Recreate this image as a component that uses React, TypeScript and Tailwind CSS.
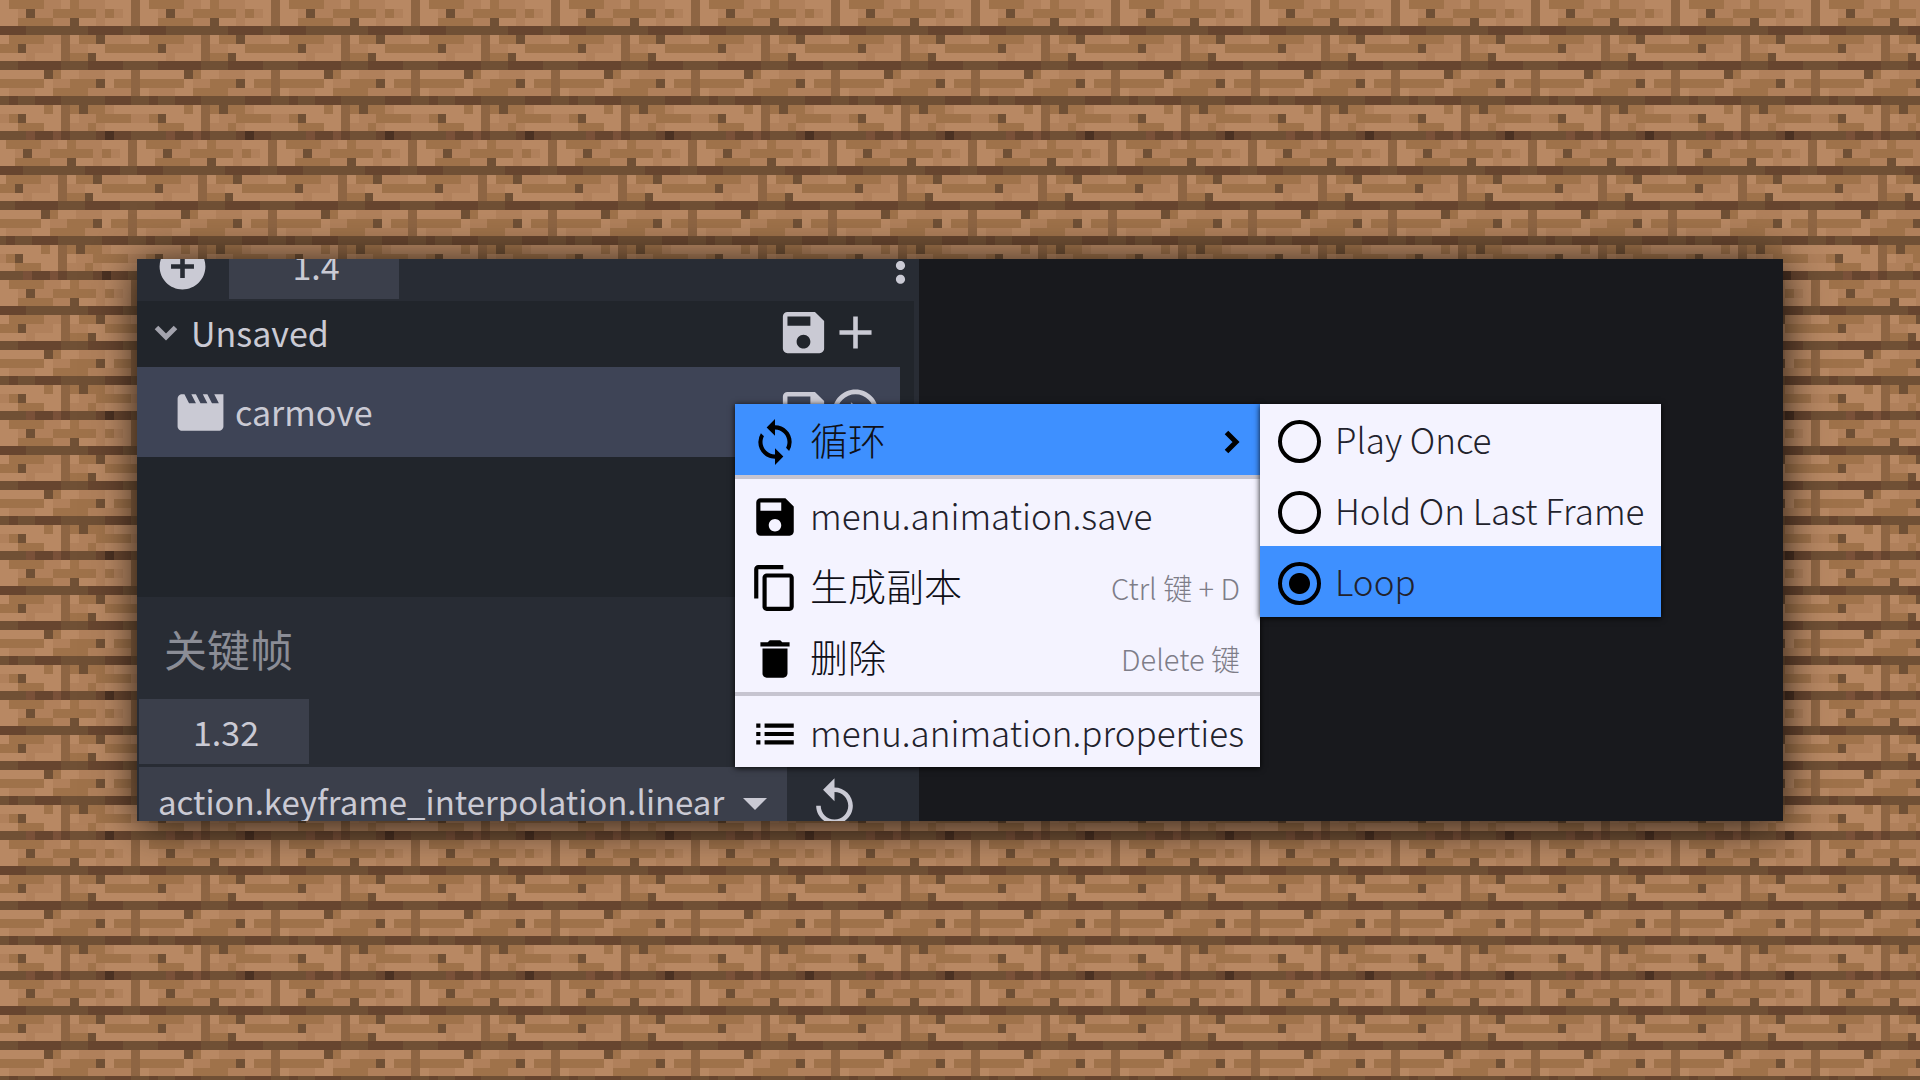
import type { ReactNode } from "react";
import {
  MdAddCircle,
  MdAdd,
  MdMoreVert,
  MdSave,
  MdMovie,
  MdPlayCircleOutline,
  MdSync,
  MdContentCopy,
  MdDelete,
  MdList,
  MdReplay,
} from "react-icons/md";

const PLANK_COLORS: Record<string, string> = {
  L: "#b88863",
  M: "#b0805b",
  T: "#9f724a",
  K: "#705035",
  V: "#8e6543",
  D: "#67452f",
  R: "#7a5139",
  X: "#4b3122",
};

// 16x16 wood plank tile, one letter per texel.
const PLANKS = [
  "LTTTTMMLTMMMLLLV",
  "LLMKMMTTTTTMTMLV",
  "LLTTTTMMKLLMLLLV",
  "DDDKKKKKKKDDDDKK",
  "LTTTTMMVLTTKMMML",
  "TTKMMMLVMMLLTTTT",
  "LLLMLLLVTTKLLLLL",
  "KKDDDDDKKKDDDDKK",
  "LLLLLKTLLMMMLLLV",
  "TTTTTLMMTTTKLTTV",
  "LMMMLLTTTTMMMMMV",
  "KDKKDDDKKKKKDDDK",
  "LLLLLTLVTKTTMLLL",
  "MTKLLLLVLMMTTTTM",
  "LLTTTLLVMMTMLLLL",
  "KKKRDDRDKKKDXDDK",
];

function PlankBackground() {
  return (
    <svg className="absolute inset-0 h-full w-full" aria-hidden="true" shapeRendering="crispEdges">
      <defs>
        <pattern id="planks" width="140" height="140" patternUnits="userSpaceOnUse">
          {PLANKS.map((row, y) =>
            row.split("").map((c, x) => (
              <rect
                key={`${x}-${y}`}
                x={Math.round(x * 8.75)}
                y={Math.round(y * 8.75)}
                width="9"
                height="9"
                fill={PLANK_COLORS[c]}
              />
            )),
          )}
        </pattern>
      </defs>
      <rect width="100%" height="100%" fill="url(#planks)" />
      <g transform="translate(-3 140)">
        <rect width="110%" height="140" fill="url(#planks)" />
      </g>
    </svg>
  );
}

function Chevron({ className }: { className: string }) {
  return (
    <svg viewBox="0 0 16 24" className={className} fill="none" stroke="currentColor" strokeWidth="5" aria-hidden="true">
      <path d="M2.5 2.5 L12 12 L2.5 21.5" />
    </svg>
  );
}

function MenuItem({
  icon,
  label,
  hotkey,
  active,
  submenu,
  large,
}: {
  icon: ReactNode;
  label: string;
  hotkey?: string;
  active?: boolean;
  submenu?: boolean;
  large?: boolean;
}) {
  return (
    <button
      type="button"
      role="menuitem"
      className={`flex h-[71px] w-full items-center gap-[10px] pr-5 pl-[15px] text-left text-black ${active ? "bg-[#3e90ff]" : ""}`}
    >
      <span className="mt-1 text-[50px]">{icon}</span>
      <span className={`flex-1 whitespace-nowrap ${large ? "mb-[2px] text-[38px] text-[#101018]" : "text-[#22222c]"}`}>
        {label}
      </span>
      {hotkey && <span className="mt-1 text-[29px] whitespace-nowrap text-[#7e7d88]">{hotkey}</span>}
      {submenu && <Chevron className="mt-1 h-6 w-4" />}
    </button>
  );
}

function LoopOption({ label, checked }: { label: string; checked?: boolean }) {
  return (
    <label className={`flex h-[71px] items-center gap-[14px] pl-[18px] ${checked ? "bg-[#3e90ff]" : ""}`}>
      <input
        type="radio"
        name="loop"
        defaultChecked={checked}
        className="mt-1 size-[43px] shrink-0 appearance-none rounded-full border-4 border-black checked:bg-[radial-gradient(circle,#000_10px,transparent_11px)]"
      />
      <span className="mb-[2px] whitespace-nowrap text-[#22222c]">{label}</span>
    </label>
  );
}

export default function App() {
  return (
    <main className="relative flex min-h-screen items-center overflow-hidden px-[137px] font-['Noto_Sans_CJK_SC','Noto_Sans',sans-serif] text-[34px] leading-none">
      <PlankBackground />
      <section className="relative flex w-full overflow-hidden bg-[#18191d] text-[#cacad4] shadow-[0_4px_40px_rgba(0,0,0,0.8)]">
        <div className="w-[782px] shrink-0 bg-[#282c34]">
          <div className="flex h-[42px] items-end overflow-hidden pr-[3px] pb-[2px] pl-[18px]">
            <div className="flex h-[66px] w-full items-center">
              <button type="button" aria-label="Add" className="text-[55px]">
                <MdAddCircle />
              </button>
              <input
                aria-label="Time"
                defaultValue="1.4"
                className="ml-[19px] h-[66px] w-[170px] bg-[#3b3f4b] pb-[2px] pl-1 text-center"
              />
              <button type="button" aria-label="More" className="-mr-3 mb-[2px] ml-auto text-[55px]">
                <MdMoreVert />
              </button>
            </div>
          </div>

          <div className="mr-[5px] bg-[#21252b]">
            <div className="flex h-[66px] items-center pr-[31px] pb-[3px] pl-[17px]">
              <button type="button" className="flex items-center gap-[13px]">
                <Chevron className="h-6 w-6 rotate-90 text-[#a3a3ad]" />
                <span>Unsaved</span>
              </button>
              <button type="button" aria-label="Save" className="ml-auto text-[55px]">
                <MdSave />
              </button>
              <button type="button" aria-label="Add animation" className="-ml-[3px] text-[55px]">
                <MdAdd />
              </button>
            </div>
            <div className="mr-[14px] flex h-[90px] items-center bg-[#3e4456] pr-[17px] pl-9">
              <MdMovie className="text-[55px]" />
              <span className="ml-[7px]">carmove</span>
              <button type="button" aria-label="Save carmove" className="ml-auto text-[55px]">
                <MdSave />
              </button>
              <button type="button" aria-label="Play carmove" className="-ml-[3px] text-[55px]">
                <MdPlayCircleOutline />
              </button>
            </div>
            <div className="h-[140px]" />
          </div>

          <h2 className="flex h-[102px] items-center pl-[27px] text-[43px] text-[#8b8d96]">关键帧</h2>
          <input
            aria-label="Keyframe time"
            defaultValue="1.32"
            className="mb-[3px] ml-[2px] block h-[65px] w-[170px] bg-[#3b3f4b] pl-1 text-center"
          />
          <div className="flex h-[54px] items-start overflow-hidden pl-[2px]">
            <div className="relative">
              <select
                aria-label="Interpolation"
                className="h-[70px] w-[648px] appearance-none bg-[#3b3f4b] pl-[19px] text-[33px] leading-normal"
              >
                <option>action.keyframe_interpolation.linear</option>
              </select>
              <svg
                viewBox="0 0 24 12"
                className="pointer-events-none absolute top-[31px] right-5 h-3 w-6"
                fill="currentColor"
                aria-hidden="true"
              >
                <path d="M0 0H24L12 12Z" />
              </svg>
            </div>
            <button type="button" aria-label="Reset" className="mt-[9px] ml-5 text-[55px]">
              <MdReplay />
            </button>
          </div>
        </div>

        <div className="absolute top-[145px] left-[598px] flex items-start text-[35px] font-light">
          <div role="menu" className="w-[525px] bg-[#f4f3ff] shadow-[0_1px_6px_rgba(0,0,0,0.9)]">
            <MenuItem icon={<MdSync />} label="循环" active submenu large />
            <hr className="h-1 border-0 bg-[#c6c4d0]" />
            <MenuItem icon={<MdSave />} label="menu.animation.save" />
            <MenuItem icon={<MdContentCopy />} label="生成副本" hotkey="Ctrl 键 + D" large />
            <MenuItem icon={<MdDelete />} label="删除" hotkey="Delete 键" large />
            <hr className="h-1 border-0 bg-[#c6c4d0]" />
            <MenuItem icon={<MdList />} label="menu.animation.properties" />
          </div>
          <div role="group" aria-label="循环" className="w-[401px] bg-[#f4f3ff] shadow-[0_1px_6px_rgba(0,0,0,0.9)]">
            <LoopOption label="Play Once" />
            <LoopOption label="Hold On Last Frame" />
            <LoopOption label="Loop" checked />
          </div>
        </div>
      </section>
    </main>
  );
}
